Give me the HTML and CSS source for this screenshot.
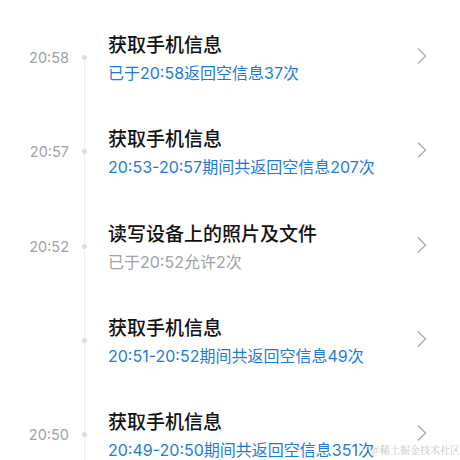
FILE: index.html
```html
<!DOCTYPE html>
<html>
<head>
<meta charset="utf-8">
<title>权限使用记录</title>
<link rel="stylesheet" href="styles.css">
</head>
<body>

<div class="timeline">

<div class="row first">
<div class="time">20:58</div>
<div class="axis"><span class="dot"></span></div>
<div class="info">
<div class="title">获取手机信息</div>
<div class="detail">已于20:58返回空信息37次</div>
</div>
<svg class="chevron" width="12" height="18" viewBox="0 0 12 18"><path d="M2 1.5 L9.5 9 L2 16.5"/></svg>
</div>

<div class="row">
<div class="time">20:57</div>
<div class="axis"><span class="dot"></span></div>
<div class="info">
<div class="title">获取手机信息</div>
<div class="detail">20:53-20:57期间共返回空信息207次</div>
</div>
<svg class="chevron" width="12" height="18" viewBox="0 0 12 18"><path d="M2 1.5 L9.5 9 L2 16.5"/></svg>
</div>

<div class="row">
<div class="time">20:52</div>
<div class="axis"><span class="dot"></span></div>
<div class="info">
<div class="title">读写设备上的照片及文件</div>
<div class="detail muted">已于20:52允许2次</div>
</div>
<svg class="chevron" width="12" height="18" viewBox="0 0 12 18"><path d="M2 1.5 L9.5 9 L2 16.5"/></svg>
</div>

<div class="row">
<div class="time"></div>
<div class="axis"><span class="dot"></span></div>
<div class="info">
<div class="title">获取手机信息</div>
<div class="detail">20:51-20:52期间共返回空信息49次</div>
</div>
<svg class="chevron" width="12" height="18" viewBox="0 0 12 18"><path d="M2 1.5 L9.5 9 L2 16.5"/></svg>
</div>

<div class="row">
<div class="time">20:50</div>
<div class="axis"><span class="dot"></span></div>
<div class="info">
<div class="title">获取手机信息</div>
<div class="detail">20:49-20:50期间共返回空信息351次</div>
</div>
<svg class="chevron" width="12" height="18" viewBox="0 0 12 18"><path d="M2 1.5 L9.5 9 L2 16.5"/></svg>
</div>

</div>

<div class="watermark">@稀土掘金技术社区</div>

</body>
</html>
```

FILE: styles.css
```css
html, body {
    margin: 0;
    height: 100%;
    overflow: hidden;
    background: #fff;
    font-family: Inter, "Noto Sans CJK SC", sans-serif;
}
.timeline {
    padding-top: 13px;
}
.row {
    display: flex;
    align-items: stretch;
    height: 94.3px;
}
.time {
    width: 70px;
    flex: none;
    display: flex;
    align-items: center;
    justify-content: flex-end;
    padding: 0 1px 5px 0;
    box-sizing: border-box;
    font-size: 14.5px;
    color: #a2a2a2;
}
.axis {
    width: 28px;
    flex: none;
    display: flex;
    align-items: center;
    justify-content: center;
    padding-bottom: 5px;
    box-sizing: border-box;
    background: linear-gradient(#eeeeee, #eeeeee) no-repeat center / 1px 100%;
}
.row.first .axis {
    background-position: center bottom;
    background-size: 1px 50%;
}
.dot {
    width: 5px;
    height: 5px;
    border-radius: 50%;
    background: #dcdcdc;
}
.info {
    flex: 1;
    display: flex;
    flex-direction: column;
    justify-content: center;
    padding-left: 10px;
}
.title {
    font-size: 19px;
    line-height: 26px;
    font-weight: 500;
    color: #111;
}
.detail {
    font-size: 16px;
    line-height: 28px;
    color: #1e7bd6;
}
.detail.muted {
    color: #a2a2a2;
}
.chevron {
    flex: none;
    align-self: center;
    margin: 0 32px 8px 0;
    fill: none;
    stroke: #b0b0b0;
    stroke-width: 1.5;
}
.watermark {
    position: absolute;
    right: 0;
    bottom: 3px;
    font-family: "Noto Serif CJK SC", "Noto Sans CJK SC", serif;
    font-size: 10px;
    color: #c4c4c4;
}
```
